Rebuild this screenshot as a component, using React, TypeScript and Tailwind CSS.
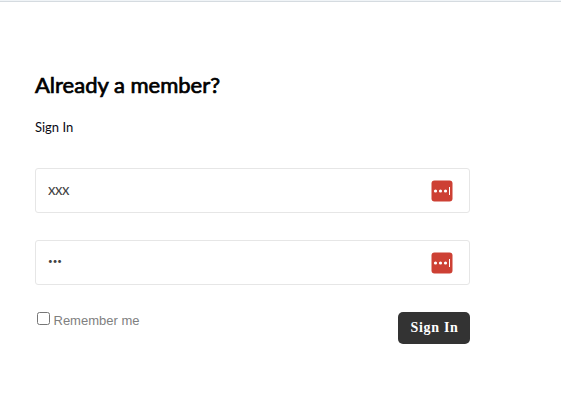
import { useState } from 'react';

function PasswordManagerIcon() {
  return (
    <svg viewBox="0 0 22 22" className="h-[22px] w-[22px] shrink-0" aria-hidden="true">
      <rect x="0.5" y="0.5" width="21" height="21" rx="3" fill="#cd4034" />
      <circle cx="4.5" cy="11" r="1.6" fill="#fff" />
      <circle cx="9.5" cy="11" r="1.6" fill="#fff" />
      <circle cx="14.5" cy="11" r="1.6" fill="#fff" />
      <rect x="18" y="7" width="1" height="8" fill="#fff" />
    </svg>
  );
}

const fieldClass =
  "flex h-[45px] items-center justify-between rounded-[3px] border border-[#e6e6e6] bg-white pl-3 pr-4 font-['Lato','Liberation_Sans',sans-serif] text-[#444]";

export default function App() {
  const [username, setUsername] = useState('xxx');
  const [password, setPassword] = useState('xxx');
  const [remember, setRemember] = useState(false);

  return (
    <div className="h-[409px] w-[561px] overflow-hidden bg-white">
      <div className="h-0.5 border-b border-[#d5dbe0] bg-[#f0f4f7]" />
      <form className="ml-[35px] w-[435px] pt-[67px]" onSubmit={(e) => e.preventDefault()}>
        <h2 className="h-8 font-['Lato','Liberation_Sans',sans-serif] text-[22px] leading-8 text-black [-webkit-text-stroke:0.7px_black]">
          Already a member?
        </h2>
        <p className="mt-4 font-['Lato','Liberation_Sans',sans-serif] text-[13px] leading-5 text-[#0a0a14]">Sign In</p>

        <div className={`mt-[31px] ${fieldClass}`}>
          <input
            aria-label="Username"
            value={username}
            onChange={(e) => setUsername(e.target.value)}
            className="min-w-0 flex-1 pb-[3px] text-[15px] tracking-[-0.5px] outline-none"
          />
          <PasswordManagerIcon />
        </div>

        <div className={`mt-[27px] ${fieldClass}`}>
          <input
            type="password"
            aria-label="Password"
            value={password}
            onChange={(e) => setPassword(e.target.value)}
            className="min-w-0 flex-1 pb-[3px] text-[8px] outline-none"
          />
          <PasswordManagerIcon />
        </div>

        <div className="mt-[27px] flex items-start justify-between">
          <label className="flex items-start font-['Liberation_Sans',sans-serif] text-[13px] leading-[17px] text-[#808080]">
            <input
              type="checkbox"
              checked={remember}
              onChange={(e) => setRemember(e.target.checked)}
              className="ml-0.5 mr-[3.5px] h-[13px] w-[13px]"
            />
            Remember me
          </label>
          <button
            type="submit"
            className="h-8 w-[72px] rounded-[5px] bg-[#333] pb-px pl-px font-['Liberation_Serif',serif] text-[14px] font-bold tracking-[0.7px] text-white"
          >
            Sign In
          </button>
        </div>
      </form>
    </div>
  );
}
